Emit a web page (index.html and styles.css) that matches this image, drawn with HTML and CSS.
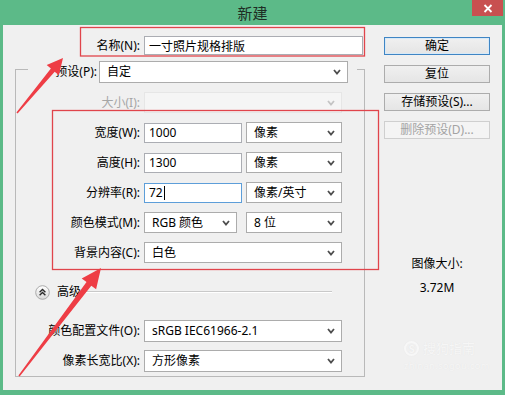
FILE: index.html
```html
<!DOCTYPE html>
<html lang="zh-CN">
<head>
<meta charset="utf-8">
<title>新建</title>
<link rel="stylesheet" href="styles.css">
</head>
<body>
<div class="window">
  <div class="titlebar">
    <div class="title">新建</div>
    <div class="close">
      <svg width="10" height="9" viewBox="0 0 10 9"><path d="M1.5 1 L8.5 8 M8.5 1 L1.5 8" stroke="#fff" stroke-width="1.8" fill="none"/></svg>
    </div>
  </div>
  <div class="client">
    <div class="main">
      <div class="row name-row">
        <span class="lbl lbl-name">名称(N):</span>
        <div class="field w-name">一寸照片规格排版</div>
      </div>
      <fieldset class="frame">
        <legend class="frame-legend">
          <div class="row legend-row">
            <span class="lbl lbl-legend">预设(P):</span>
            <div class="select w-preset"><span class="val">自定</span><svg class="chev" width="8" height="6" viewBox="0 0 8 6"><path d="M1 1 L4 4.5 L7 1" stroke="#4d4d4d" stroke-width="1.8" fill="none"/></svg></div>
          </div>
        </legend>

        <div class="row frow">
          <span class="lbl lbl-frame disabled">大小(I):</span>
          <div class="select w-full is-disabled"><span class="val"></span><svg class="chev" width="8" height="6" viewBox="0 0 8 6"><path d="M1 1 L4 4.5 L7 1" stroke="#c4c4c4" stroke-width="1.8" fill="none"/></svg></div>
        </div>

        <div class="row frow">
          <span class="lbl lbl-frame">宽度(W):</span>
          <div class="field w-num">1000</div>
          <div class="select w-unit"><span class="val">像素</span><svg class="chev" width="8" height="6" viewBox="0 0 8 6"><path d="M1 1 L4 4.5 L7 1" stroke="#4d4d4d" stroke-width="1.8" fill="none"/></svg></div>
        </div>

        <div class="row frow">
          <span class="lbl lbl-frame">高度(H):</span>
          <div class="field w-num">1300</div>
          <div class="select w-unit"><span class="val">像素</span><svg class="chev" width="8" height="6" viewBox="0 0 8 6"><path d="M1 1 L4 4.5 L7 1" stroke="#4d4d4d" stroke-width="1.8" fill="none"/></svg></div>
        </div>

        <div class="row frow">
          <span class="lbl lbl-frame">分辨率(R):</span>
          <div class="field w-num is-focused">72<span class="caret"></span></div>
          <div class="select w-unit"><span class="val">像素/英寸</span><svg class="chev" width="8" height="6" viewBox="0 0 8 6"><path d="M1 1 L4 4.5 L7 1" stroke="#4d4d4d" stroke-width="1.8" fill="none"/></svg></div>
        </div>

        <div class="row frow">
          <span class="lbl lbl-frame">颜色模式(M):</span>
          <div class="select w-mode"><span class="val">RGB 颜色</span><svg class="chev" width="8" height="6" viewBox="0 0 8 6"><path d="M1 1 L4 4.5 L7 1" stroke="#4d4d4d" stroke-width="1.8" fill="none"/></svg></div>
          <div class="select w-unit w-bits"><span class="val">8 位</span><svg class="chev" width="8" height="6" viewBox="0 0 8 6"><path d="M1 1 L4 4.5 L7 1" stroke="#4d4d4d" stroke-width="1.8" fill="none"/></svg></div>
        </div>

        <div class="row frow">
          <span class="lbl lbl-frame">背景内容(C):</span>
          <div class="select w-full"><span class="val">白色</span><svg class="chev" width="8" height="6" viewBox="0 0 8 6"><path d="M1 1 L4 4.5 L7 1" stroke="#4d4d4d" stroke-width="1.8" fill="none"/></svg></div>
        </div>

        <div class="row adv-row">
          <svg class="toggle" width="15" height="15" viewBox="0 0 15 15">
            <defs>
              <linearGradient id="tg" x1="0" y1="0" x2="0" y2="1">
                <stop offset="0" stop-color="#ffffff"/>
                <stop offset="1" stop-color="#d9d9d9"/>
              </linearGradient>
            </defs>
            <circle cx="7.5" cy="7.5" r="6.8" fill="url(#tg)" stroke="#a3a3a3" stroke-width="0.9"/>
            <path d="M4.6 7.2 L7.5 4.5 L10.4 7.2 M4.6 10.2 L7.5 7.5 L10.4 10.2" stroke="#2b2b2b" stroke-width="1.4" fill="none"/>
          </svg>
          <span class="adv-text">高级</span>
          <span class="adv-line"></span>
        </div>

        <div class="row frow profile-row">
          <span class="lbl lbl-frame">颜色配置文件(O):</span>
          <div class="select w-full tall"><span class="val">sRGB IEC61966-2.1</span><svg class="chev" width="8" height="6" viewBox="0 0 8 6"><path d="M1 1 L4 4.5 L7 1" stroke="#4d4d4d" stroke-width="1.8" fill="none"/></svg></div>
        </div>

        <div class="row frow aspect-row">
          <span class="lbl lbl-frame">像素长宽比(X):</span>
          <div class="select w-full tall"><span class="val">方形像素</span><svg class="chev" width="8" height="6" viewBox="0 0 8 6"><path d="M1 1 L4 4.5 L7 1" stroke="#4d4d4d" stroke-width="1.8" fill="none"/></svg></div>
        </div>
      </fieldset>
    </div>

    <div class="side">
      <div class="btn btn-default">确定</div>
      <div class="btn">复位</div>
      <div class="btn">存储预设(S)...</div>
      <div class="btn btn-disabled">删除预设(D)...</div>
      <div class="info">
        <div class="info-label">图像大小:</div>
        <div class="info-value">3.72M</div>
      </div>
    </div>
  </div>

  <div class="watermark">
    <div class="wm-brand"><span class="wm-s">S</span><span>搜狗指南</span></div>
    <div class="wm-url">zhinan.sogou.com</div>
  </div>

  <svg class="annot" width="505" height="395" viewBox="0 0 505 395">
    <rect x="80.5" y="27.5" width="284" height="28.5" fill="none" stroke="#e0444b" stroke-width="1.3"/>
    <rect x="52.5" y="110.5" width="326" height="159" fill="none" stroke="#e0444b" stroke-width="1.3"/>
    <polygon points="16.4,112.6 17.6,113.6 54.7,71.8 58.9,75.3 63,58 46.7,65.1 50.9,68.6" fill="#ee3d45"/>
    <polygon points="18.4,375.4 19.6,376.4 91.3,285.7 96.1,289.3 101,268 81.7,278.5 86.5,282.1" fill="#ee3d45"/>
  </svg>
</div>
</body>
</html>
```

FILE: styles.css
```css
* {
  box-sizing: border-box;
}

html,
body {
  margin: 0;
  padding: 0;
}

body {
  width: 505px;
  height: 395px;
  overflow: hidden;
  font-family: "Noto Sans", "Noto Sans CJK SC", sans-serif;
  font-size: 12px;
  color: #000;
}

.window {
  position: relative;
  width: 505px;
  height: 395px;
  background: #5cba88;
  display: flex;
  flex-direction: column;
}

/* title bar */
.titlebar {
  height: 25px;
  display: grid;
  grid-template-columns: 1fr auto 1fr;
}

.title {
  grid-column: 2;
  font-family: "Noto Sans CJK SC", sans-serif;
  font-size: 15px;
  line-height: 25px;
  color: #1e2d24;
}

.close {
  grid-column: 3;
  justify-self: end;
  align-self: start;
  width: 31px;
  height: 16px;
  margin-right: 2px;
  background: #c85050;
  display: flex;
  align-items: center;
  justify-content: center;
}

/* client area */
.client {
  margin: 0 3px;
  height: 365px;
  background: #f0f0f0;
  display: flex;
}

.main {
  width: 381px;
}

.row {
  display: flex;
  align-items: center;
}

.lbl {
  text-align: right;
  white-space: nowrap;
  line-height: 16px;
}

.disabled {
  color: #a6a6a6;
}

/* name */
.name-row {
  margin-top: 11px;
  height: 19px;
  gap: 4px;
}

.lbl-name {
  width: 137px;
}

.field {
  height: 20px;
  border: 1px solid #abadb3;
  background: #fff;
  padding-left: 4px;
  line-height: 18px;
  white-space: nowrap;
  display: flex;
  align-items: center;
}

.w-name {
  width: 219px;
  height: 19px;
  font-family: "Noto Sans CJK SC", sans-serif;
}

.w-num {
  width: 98px;
}

.is-focused {
  border-color: #5d9ed9;
}

.caret {
  display: inline-block;
  width: 1px;
  height: 14px;
  background: #000;
  margin-left: 1px;
}

/* selects */
.select {
  height: 21px;
  border: 1px solid #acacac;
  background: #fff;
  display: flex;
  align-items: center;
  padding: 0 6px 0 7px;
  white-space: nowrap;
}

.select .val {
  flex: 1;
  line-height: 16px;
}

.select .chev {
  flex: none;
}

.select.is-disabled {
  background: #f5f5f5;
  border-color: #e6e6e6;
}

.select.tall {
  height: 22px;
}

.w-preset {
  width: 249px;
  height: 22px;
}

.w-full {
  width: 198px;
}

.w-unit {
  width: 96px;
}

.w-mode {
  width: 93px;
}

.w-bits {
  margin-left: 5px;
}

/* frame */
.frame {
  margin: 0 0 0 12px;
  padding: 0 0 4px 0;
  width: 350px;
  border: 1px solid #b9b9b9;
  min-width: 0;
}

.frame-legend {
  margin-left: 12px;
  width: 329px;
  padding: 6px 0 0 0;
}

.legend-row {
  height: 22px;
  gap: 2px;
}

.lbl-legend {
  width: 69px;
}

.frow {
  height: 21px;
  margin-top: 9px;
  gap: 4px;
}

.lbl-frame {
  width: 124px;
}

.adv-row {
  height: 16px;
  margin-top: 21px;
  padding-left: 19px;
}

.toggle {
  flex: none;
}

.adv-text {
  margin-left: 7px;
  line-height: 16px;
}

.adv-line {
  flex: 1;
  height: 2px;
  margin: 0 32px 0 4px;
  border-top: 1px solid #c9c9c9;
  border-bottom: 1px solid #fff;
}

.profile-row {
  height: 22px;
  margin-top: 20px;
}

.aspect-row {
  height: 22px;
  margin-top: 8px;
}

/* side buttons */
.side {
  width: 106px;
  padding-top: 12px;
  display: flex;
  flex-direction: column;
}

.btn {
  height: 18px;
  margin-bottom: 10px;
  border: 1px solid #acacac;
  background: linear-gradient(#f0f0f0, #e5e5e5);
  text-align: center;
  line-height: 16px;
  white-space: nowrap;
}

.btn-default {
  border-color: #3f85c4;
  box-shadow: inset 0 0 0 1px #d7e9f7;
}

.btn-disabled {
  color: #a3a3a3;
  border-color: #cfcfcf;
  background: #f4f4f4;
}

.info {
  margin-top: 107px;
  text-align: center;
}

.info-label {
  line-height: 16px;
}

.info-value {
  margin-top: 8px;
  line-height: 16px;
}

/* watermark overlay */
.watermark {
  position: absolute;
  left: 404px;
  top: 340px;
  color: #f6f6f6;
  text-shadow: 0 0 1px #e2e2e2;
  pointer-events: none;
}

.wm-brand {
  display: flex;
  align-items: center;
  gap: 4px;
  font-family: "Noto Sans CJK SC", sans-serif;
  font-size: 13px;
  line-height: 16px;
}

.wm-s {
  width: 15px;
  height: 15px;
  border-radius: 50%;
  border: 2px solid #f7f7f7;
  box-shadow: 0 0 1px #e0e0e0;
  font-size: 10px;
  line-height: 11px;
  text-align: center;
  font-weight: bold;
}

.wm-url {
  font-size: 9px;
  line-height: 12px;
  margin-top: 4px;
  letter-spacing: 0.5px;
}

/* annotation overlay */
.annot {
  position: absolute;
  left: 0;
  top: 0;
  pointer-events: none;
}
```
